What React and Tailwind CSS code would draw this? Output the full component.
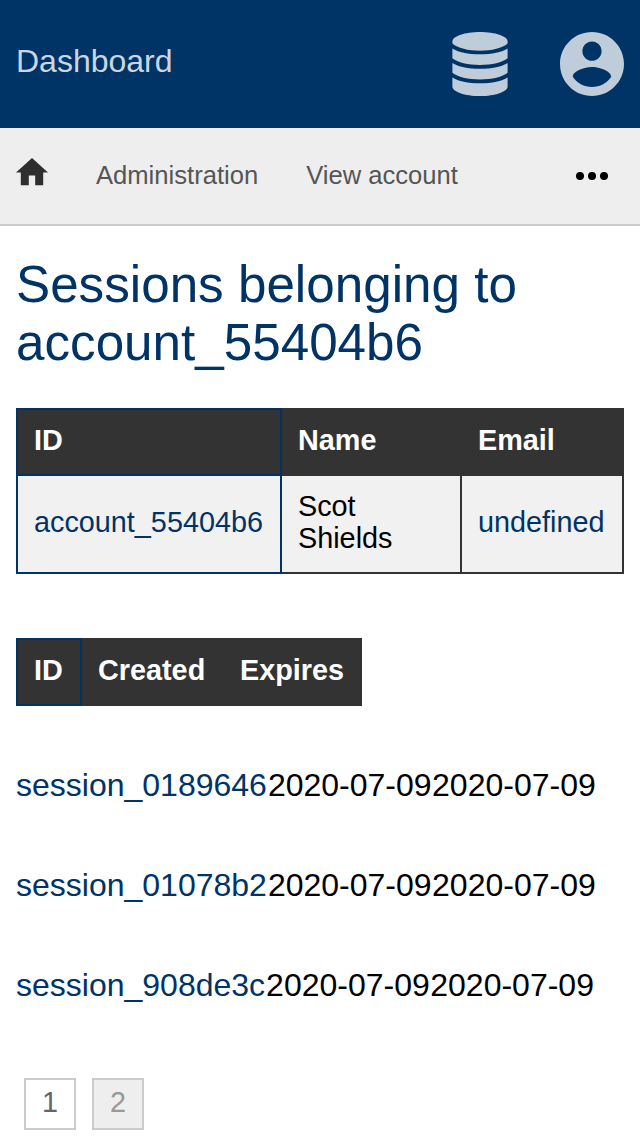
const sessions = [
  { id: 'session_0189646', created: '2020-07-09', expires: '2020-07-09' },
  { id: 'session_01078b2', created: '2020-07-09', expires: '2020-07-09' },
  { id: 'session_908de3c', created: '2020-07-09', expires: '2020-07-09' },
];

function DatabaseIcon() {
  return (
    <svg className="h-16 w-14" viewBox="0 0 56 64" fill="currentColor" aria-hidden="true">
      <path d="M28 0C43.200 0 55.600 4.200 55.600 9.400V11.600C50.500 16.200 40 18.800 28 18.800S5.500 16.200 0.400 11.600V9.400C0.400 4.200 12.800 0 28 0Z" />
      <path d="M0.400 16.400C6 20.200 16 22.200 28 22.200S50 20.200 55.600 16.400V26.200C50.500 30.400 40 32.900 28 32.900S5.500 30.400 0.400 26.200Z" />
      <path d="M0.400 30.900C6 34.700 16 36.700 28 36.700S50 34.700 55.600 30.900V40.700C50.500 44.900 40 47.400 28 47.400S5.500 44.900 0.400 40.700Z" />
      <path d="M0.400 45.500C6 49.300 16 51.300 28 51.300S50 49.300 55.600 45.500V54.400C55.600 59.700 43.200 64 28 64S0.400 59.700 0.400 54.400Z" />
    </svg>
  );
}

function AccountIcon() {
  return (
    <svg className="h-16 w-16" viewBox="2 2 20 20" fill="currentColor" aria-hidden="true">
      <path d="M12 2C6.48 2 2 6.48 2 12s4.48 10 10 10 10-4.48 10-10S17.52 2 12 2zm0 3c1.66 0 3 1.34 3 3s-1.34 3-3 3-3-1.34-3-3 1.34-3 3-3zm0 14.200c-2.500 0-4.710-1.280-6-3.220.03-1.990 4-3.080 6-3.080 1.990 0 5.970 1.090 6 3.080-1.290 1.940-3.500 3.220-6 3.220z" />
    </svg>
  );
}

function HomeIcon() {
  return (
    <svg className="h-[27.2px] w-8" viewBox="2 3 20 17" fill="currentColor" aria-hidden="true">
      <path d="M10 20v-6h4v6h5v-8h3L12 3 2 12h3v8z" />
    </svg>
  );
}

function Header() {
  return (
    <header className="flex h-32 items-center bg-[#003366] px-4 text-[#bfccd9]">
      <a className="-mt-1.5 text-[32px] leading-9 text-[#ccd6e0]">Dashboard</a>
      <div className="ml-auto flex gap-[52px]">
        <DatabaseIcon />
        <AccountIcon />
      </div>
    </header>
  );
}

function Nav() {
  return (
    <nav className="flex h-[98px] items-center border-b-2 border-[#cccccc] bg-[#eeeeee] pl-4 pr-8 text-[25.6px] leading-[30px] text-[#555555]">
      <a className="-mt-2 text-[#2e2e2e]"><HomeIcon /></a>
      <a className="-mt-0.5 ml-12">Administration</a>
      <a className="-mt-0.5 ml-12">View account</a>
      <button className="ml-auto flex gap-1" aria-label="More">
        <span className="size-2 rounded-full bg-black" />
        <span className="size-2 rounded-full bg-black" />
        <span className="size-2 rounded-full bg-black" />
      </button>
    </nav>
  );
}

function AccountTable() {
  return (
    <table className="mt-9 w-[608px] table-fixed border-collapse text-left text-[28.8px] leading-8">
      <colgroup>
        <col className="w-[264px]" />
        <col className="w-[180px]" />
        <col className="w-[162px]" />
      </colgroup>
      <thead>
        <tr className="h-[66px] bg-[#333333] text-white">
          <th className="border-2 border-[#003366] px-4 pb-1">ID</th>
          <th className="border-2 border-[#333333] px-4 pb-1">Name</th>
          <th className="border-2 border-[#333333] px-4 pb-1">Email</th>
        </tr>
      </thead>
      <tbody>
        <tr className="h-[98px] bg-[#f1f1f1]">
          <td className="border-2 border-[#003366] px-4 pb-1 text-[#003366]">account_55404b6</td>
          <td className="border-2 border-[#333333] px-4 pb-1">Scot Shields</td>
          <td className="border-2 border-[#333333] px-4 pb-1 text-[#003366]">undefined</td>
        </tr>
      </tbody>
    </table>
  );
}

function SessionsHeader() {
  return (
    <table className="mt-16 w-[346px] table-fixed border-collapse text-left text-[28.8px] leading-8">
      <colgroup>
        <col className="w-[64px]" />
        <col className="w-[142px]" />
        <col className="w-[138px]" />
      </colgroup>
      <thead>
        <tr className="h-[66px] bg-[#333333] text-white">
          <th className="border-2 border-[#003366] pl-4 pb-1">ID</th>
          <th className="border-2 border-[#333333] pl-4 pb-1">Created</th>
          <th className="border-2 border-[#333333] pl-4 pb-1">Expires</th>
        </tr>
      </thead>
    </table>
  );
}

export default function App() {
  return (
    <div className="h-[1136px] w-[640px] overflow-hidden bg-white font-['Liberation_Sans',Arial,sans-serif] text-black">
      <Header />
      <Nav />
      <main className="px-4 pt-[30px]">
        <h1 className="text-[51.2px] leading-[58px] text-[#003366]">
          Sessions belonging to account_55404b6
        </h1>
        <AccountTable />
        <SessionsHeader />
        <ul className="mt-[29px] text-[32px] leading-[36px]">
          {sessions.map((s) => (
            <li key={s.id} className="flex h-[100px] items-center whitespace-nowrap">
              <a className="text-[#003366]">{s.id}</a>
              <span className="ml-px">{s.created}</span>
              <span className="ml-[0.5px]">{s.expires}</span>
            </li>
          ))}
        </ul>
        <div className="mt-[43px] flex gap-4 pl-2 text-[28.8px] leading-8">
          <span className="flex size-[52px] items-center justify-center border-2 border-[#cccccc] pb-1 text-[#666666]">1</span>
          <span className="flex size-[52px] items-center justify-center border-2 border-[#cccccc] bg-[#eeeeee] pb-1 text-[#999999]">2</span>
        </div>
      </main>
    </div>
  );
}
